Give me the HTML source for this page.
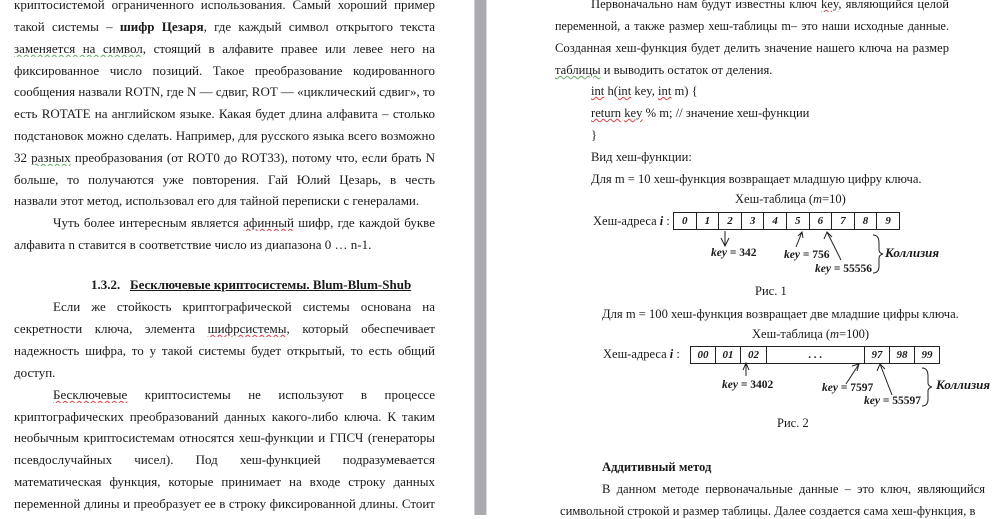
<!DOCTYPE html>
<html><head><meta charset="utf-8"><style>
body{margin:0;width:1000px;height:515px;overflow:hidden;background:#fff;position:relative;font-family:"Liberation Serif","DejaVu Serif",serif;font-size:13px;color:#1a1a1a}
.l{position:absolute;white-space:nowrap;line-height:16px}
.j{text-align:justify;text-align-last:justify;white-space:normal;height:16px;overflow:hidden}
.L{left:14px;width:421px}
.R{left:555px;width:394px}
.t{font-size:12.6px}
.w{text-decoration:underline wavy #d44;text-decoration-thickness:1px}
.g{text-decoration:underline wavy #6a6;text-decoration-thickness:1px}
.bar{position:absolute;left:474px;top:0;width:11px;height:515px;background:#a9abae;border-left:1px solid #d0d2d4;border-right:1px solid #d8dadc}
table{position:absolute;border-collapse:collapse;table-layout:fixed}
td{border:1.3px solid #222;text-align:center;font-style:italic;font-weight:bold;font-size:11px;padding:0;height:16px}
.s{font-size:12.5px}
.k{font-size:11.5px;font-weight:bold}
svg{position:absolute;left:0;top:0}
</style></head><body>
<div class="bar"></div>

<div class="l j L" style="top:-3px">криптосистемой ограниченного использования. Самый хороший пример</div>
<div class="l j L" style="top:19px">такой системы – <b>шифр Цезаря</b>, где каждый символ открытого текста</div>
<div class="l j L" style="top:41px"><span class="g">заменяется на символ</span>, стоящий в алфавите правее или левее него на</div>
<div class="l j L" style="top:63px">фиксированное число позиций. Такое преобразование кодированного</div>
<div class="l j L" style="top:84px">сообщения назвали ROTN, где N — сдвиг, ROT — «циклический сдвиг», то</div>
<div class="l j L" style="top:106px">есть ROTATE на английском языке. Какая будет длина алфавита – столько</div>
<div class="l j L" style="top:128px">подстановок можно сделать. Например, для русского языка всего возможно</div>
<div class="l j L" style="top:150px">32 <span class="g">разных</span> преобразования (от ROT0 до ROT33), потому что, если брать N</div>
<div class="l j L" style="top:172px">больше, то получаются уже повторения. Гай Юлий Цезарь, в честь которого</div>
<div class="l" style="top:193px;left:14px">назвали этот метод, использовал его для тайной переписки с генералами.</div>
<div class="l j" style="top:215px;left:53px;width:382px">Чуть более интересным является <span class="w">афинный</span> шифр, где каждой букве</div>
<div class="l" style="top:237px;left:14px">алфавита n ставится в соответствие число из диапазона 0 … n-1.</div>

<div class="l" style="top:277px;left:91px"><b>1.3.2.&nbsp;&nbsp; <u>Бесключевые криптосистемы. Blum-Blum-Shub</u></b></div>
<div class="l j" style="top:299px;left:53px;width:382px">Если же стойкость криптографической системы основана на</div>
<div class="l j L" style="top:321px">секретности ключа, элемента <span class="w">шифрсистемы</span>, который обеспечивает</div>
<div class="l j L" style="top:343px">надежность шифра, то у такой системы будет открытый, то есть общий</div>
<div class="l" style="top:365px;left:14px">доступ.</div>
<div class="l j" style="top:387px;left:53px;width:382px"><span class="w">Бесключевые</span> криптосистемы не используют в процессе</div>
<div class="l j L" style="top:409px">криптографических преобразований данных какого-либо ключа. К таким</div>
<div class="l j L" style="top:430px">необычным криптосистемам относятся хеш-функции и ГПСЧ (генераторы</div>
<div class="l j L" style="top:452px">псевдослучайных чисел). Под хеш-функцией подразумевается</div>
<div class="l j L" style="top:474px">математическая функция, которые принимает на входе строку данных</div>
<div class="l j L" style="top:496px">переменной длины и преобразует ее в строку фиксированной длины. Стоит</div>

<div class="l j t" style="top:-4px;left:591px;width:358px">Первоначально нам будут известны ключ <span class="w">key</span>, являющийся целой</div>
<div class="l j R" style="top:18px;font-size:12.2px">переменной, а также размер хеш-таблицы m– это наши исходные данные.</div>
<div class="l j R t" style="top:40px">Созданная хеш-функция будет делить значение нашего ключа на размер</div>
<div class="l t" style="top:62px;left:555px"><span class="g">таблицы</span> и выводить остаток от деления.</div>
<div class="l t" style="top:83px;left:591px"><span class="w">int</span> h(<span class="w">int</span> key, <span class="w">int</span> m) {</div>
<div class="l t" style="top:105px;left:591px"><span class="w">return</span> <span class="w">key</span> % m; // значение хеш-функции</div>
<div class="l t" style="top:127px;left:591px">}</div>
<div class="l t" style="top:149px;left:591px">Вид хеш-функции:</div>
<div class="l t" style="top:171px;left:591px">Для m = 10 хеш-функция возвращает младшую цифру ключа.</div>

<div class="l s" style="top:191px;left:735px">Хеш-таблица (<i>m</i>=10)</div>
<div class="l s" style="top:213px;left:593px">Хеш-адреса <b><i>i</i></b> :</div>
<table style="left:673px;top:212px;width:227px"><tr><td>0</td><td>1</td><td>2</td><td>3</td><td>4</td><td>5</td><td>6</td><td>7</td><td>8</td><td>9</td></tr></table>
<div class="l k" style="top:245px;left:711px"><i>key</i> = 342</div>
<div class="l k" style="top:247px;left:784px"><i>key</i> = 756</div>
<div class="l k" style="top:261px;left:815px"><i>key</i> = 55556</div>
<div class="l" style="top:245px;left:885px;font-size:13px;font-weight:bold;font-style:italic">Коллизия</div>
<div class="l s" style="top:283px;left:755px">Рис. 1</div>

<div class="l t" style="top:306px;left:602px">Для m = 100 хеш-функция возвращает две младшие цифры ключа.</div>
<div class="l s" style="top:326px;left:752px">Хеш-таблица (<i>m</i>=100)</div>
<div class="l s" style="top:346px;left:603px">Хеш-адреса <b><i>i</i></b> :</div>
<table style="left:690px;top:346px;width:242px"><tr><td style="width:24px">00</td><td style="width:24px">01</td><td style="width:25px">02</td><td style="width:97px">. . .</td><td style="width:24px">97</td><td style="width:24px">98</td><td style="width:24px">99</td></tr></table>
<div class="l k" style="top:377px;left:722px"><i>key</i> = 3402</div>
<div class="l k" style="top:380px;left:822px"><i>key</i> = 7597</div>
<div class="l k" style="top:393px;left:864px"><i>key</i> = 55597</div>
<div class="l" style="top:377px;left:936px;font-size:13px;font-weight:bold;font-style:italic">Коллизия</div>
<div class="l s" style="top:415px;left:777px">Рис. 2</div>

<div class="l t" style="top:459px;left:602px"><b>Аддитивный метод</b></div>
<div class="l j t" style="top:481px;left:602px;width:383px">В данном методе первоначальные данные – это ключ, являющийся</div>
<div class="l t" style="top:503px;left:560px">символьной строкой и размер таблицы. Далее создается сама хеш-функция, в</div>

<svg width="1000" height="515" fill="none" stroke="#222" stroke-width="1">
<path d="M725 231V246M721 238L725 246L729 238"/>
<path d="M802 232L796 247M798 236L802 232L803 238"/>
<path d="M827 232L841 260M824 239L827 232L832 237"/>
<path d="M873 235Q879 235 879 243V250Q879 253 883 254Q879 255 879 258V266Q879 273 873 273"/>
<path d="M746 363V376M743 370L746 363L749 370"/>
<path d="M859 364L846 384M852 366L859 364L857 371"/>
<path d="M880 364L892 395M877 371L880 364L885 369"/>
<path d="M922 368Q928 368 928 376V383Q928 386 932 387Q928 388 928 391V399Q928 406 922 406"/>
</svg>
</body></html>
